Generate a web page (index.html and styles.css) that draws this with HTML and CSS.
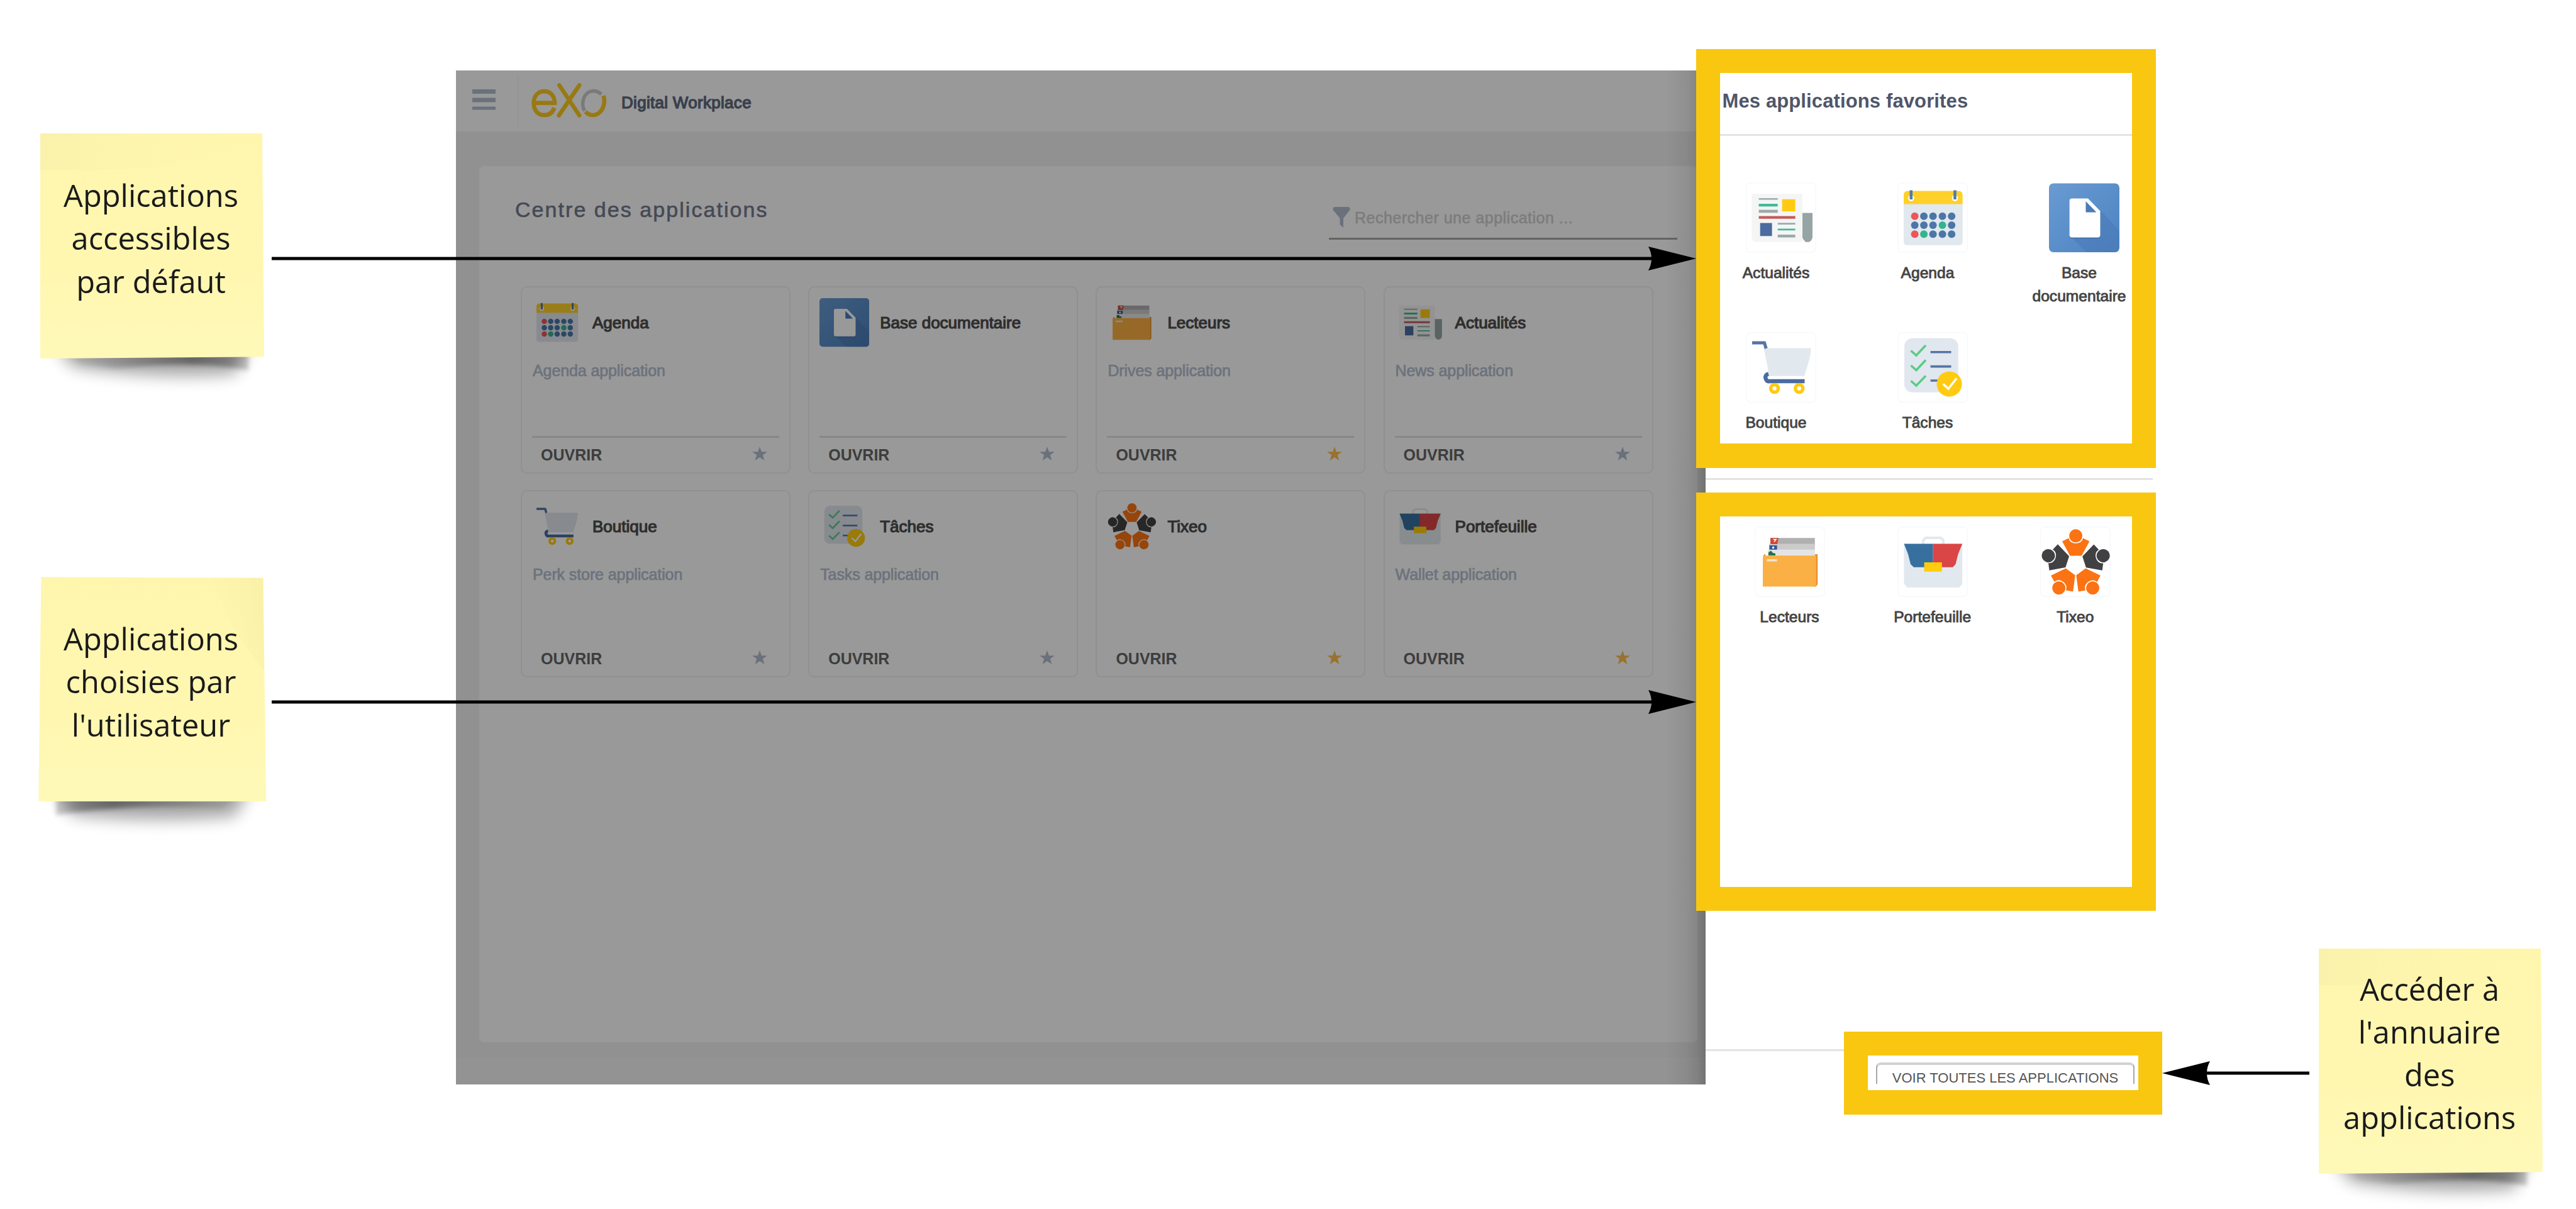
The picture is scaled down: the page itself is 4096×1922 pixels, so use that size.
FILE: index.html
```html
<!DOCTYPE html>
<html lang="fr">
<head>
<meta charset="utf-8">
<title>Centre des applications</title>
<link rel="stylesheet" href="styles.css">
</head>
<body>
<svg class="sprite" aria-hidden="true">
  <defs>
    <linearGradient id="doc-blue" x1="0" y1="0" x2="1" y2="1"><stop offset="0" stop-color="#6a9ad2"/><stop offset=".5" stop-color="#5a8fca"/><stop offset="1" stop-color="#4f82c0"/></linearGradient>
    <g id="tixeo-person">
      <path d="M35 23.4 45.5 18.4C47 29.500 66.5 29.500 68 18.4L78.4 23.4 66 46.5H47.4Z"/>
      <circle cx="56.6" cy="14.8" r="10.5"/>
    </g>
  </defs>
  <symbol id="news" viewBox="0 0 112 112">
    <path d="M9.4 18.2H90V94.7H17Q9.4 94.7 9.4 86Z" fill="#f5f5f5"/>
    <path d="M20.6 25h30.1v2.6H20.6zM20.6 43.5h30.1v4.7H20.6zM50.7 64.3h27.9v2.6H50.7zM50.7 83h27.9v4.4H50.7z" fill="#9aaaa9"/>
    <path d="M20.6 33.9h30.1v4.4H20.6zM50.7 73.6h27.9v2.6H50.7z" fill="#41ba93"/>
    <path d="M57.7 26.7h20.9V46H57.7z" fill="#ffcb12"/>
    <path d="M20.6 53.5h58v4.2h-58z" fill="#c45a5a"/>
    <path d="M22.7 64.5h18.9v20.8H22.7z" fill="#4b6c9f"/>
    <path d="M90 48.4h16V87Q105 93 100.5 94.7H95Q91 91 90 88Z" fill="#95a5a4"/>
  </symbol>
  <symbol id="calendar" viewBox="0 0 112 112">
    <path d="M10 34h93.7v60q0 5.8-5.8 5.8H15.8q-5.8 0-5.8-5.8z" fill="#e1e8ee"/>
    <path d="M10 34.5V20q0-6.6 6.6-6.6h80.5q6.6 0 6.6 6.6v14.5z" fill="#ffd02a"/>
    <circle cx="21.8" cy="25" r="4.8" fill="#fff"/><circle cx="91.5" cy="25" r="4.8" fill="#fff"/>
    <path d="M21.8 12.5V27M91.5 12.5V27" stroke="#527ba6" stroke-width="4.6" fill="none"/>
    <g fill="#4b76a8"><circle cx="42.1" cy="53.7" r="6"/><circle cx="56.6" cy="53.7" r="6"/><circle cx="71.6" cy="53.7" r="6"/><circle cx="86.2" cy="53.7" r="6"/><circle cx="27.6" cy="67.9" r="6"/><circle cx="42.1" cy="67.9" r="6"/><circle cx="56.6" cy="67.9" r="6"/><circle cx="86.2" cy="67.9" r="6"/><circle cx="56.6" cy="82.2" r="6"/><circle cx="71.6" cy="82.2" r="6"/><circle cx="86.2" cy="82.2" r="6"/></g>
    <g fill="#ec5657"><circle cx="27.6" cy="53.7" r="6"/><circle cx="27.6" cy="82.2" r="6"/></g>
    <g fill="#33b58c"><circle cx="71.6" cy="67.9" r="6"/><circle cx="42.1" cy="82.2" r="6"/></g>
  </symbol>
  <symbol id="document" viewBox="0 0 112 112">
    <rect y="1.5" width="112" height="109.5" rx="7" fill="url(#doc-blue)"/>
    <path d="M81.2 44 112 77v27q0 7-7 7H60L35 86.3Z" fill="#4577b3" opacity=".5"/>
    <path d="M36.6 26H62L81.5 45.5V83.5q0 4-4 4H36.6q-4 0-4-4V30q0-4 4-4z" fill="#3f6ea8" opacity=".5" transform="translate(0 2.5)"/>
    <path d="M36.6 25.5H62L81.5 45.5V83.5q0 4-4 4H36.6q-4 0-4-4V29.5q0-4 4-4z" fill="#fff"/>
    <path d="M58.5 30V47.5H75.5Z" fill="#4c7cb4"/>
  </symbol>
  <symbol id="cart" viewBox="0 0 112 112">
    <path d="M28.6 25.5H103.7C103 42 97 55 93.2 69.8H36.6C35 52 31 40 28.6 25.5Z" fill="#e1e8ee"/>
    <path d="M10 17H29.5L32.2 26" fill="none" stroke="#5474a6" stroke-width="5"/>
    <path d="M36 66.5Q30 68 31.5 73.5T38 78H93.5" fill="none" stroke="#4a6b9f" stroke-width="6.5"/>
    <g fill="#fff" stroke="#ffcb12" stroke-width="5.5"><circle cx="45.6" cy="89.5" r="6"/><circle cx="84.7" cy="89.5" r="6"/></g>
  </symbol>
  <symbol id="tasks" viewBox="0 0 112 112">
    <rect x="11" y="9.8" width="85.7" height="86" rx="13" fill="#e1e7ee"/>
    <path d="M21.5 29.5 30 37 45 21M21.5 53 30 60.5 45 44.5M21.5 77.5 30 85 45 69.5" fill="none" stroke="#5ccb86" stroke-width="3.6"/>
    <path d="M52.6 31.8H85.5M52.6 54.6H85.5M52.6 77H66" stroke="#5474a6" stroke-width="3.6"/>
    <circle cx="82.5" cy="82.5" r="20" fill="#ffcb12"/>
    <path d="M72.8 82.5 81 90 94 73.5" fill="none" stroke="#fff" stroke-width="3.4"/>
  </symbol>
  <symbol id="drives" viewBox="0 0 112 112">
    <path d="M95.7 44h4.5V92l-3 3.4h-4zM13 47l4-4v6z" fill="#e8922f"/>
    <path d="M25 18.2H95.7V30H25z" fill="#b0b0b0"/><path d="M22.8 27.6H95.7V40H22.8z" fill="#cbcbcb"/><path d="M21 36.7H95.7V50H21z" fill="#e4e4e4"/>
    <path d="M25 18.2H38L36 28H25z" fill="#cf4a35"/><path d="M29.5 20.5h4.5l-3 4" fill="none" stroke="#fff" stroke-width="1.5"/>
    <path d="M23.5 30H35.6V36.7H23.5z" fill="#2d569c"/><circle cx="29.5" cy="33.5" r="1.8" fill="#fff"/>
    <path d="M22 46V41L26 38.5 29 42 33 43V46Z" fill="#20744a"/>
    <path d="M13 48.5 15.5 46.3H97.6V93.5L95.5 95.4H13Z" fill="#fbb045"/>
    <path d="M19.5 52H35.6V55.6H19.5z" fill="#f4e4cf"/>
  </symbol>
  <symbol id="wallet" viewBox="0 0 112 112">
    <path d="M40.8 29V22L45 18H69L73 22V29" fill="none" stroke="#e1e9ef" stroke-width="4"/>
    <path d="M10.5 27.6H103.2V91l-5 6H15.5l-5-6z" fill="#e1e9ef"/>
    <path d="M10.5 27.6H56.6V64.8H26L21 60 17 44Z" fill="#37709f"/>
    <path d="M103.2 27.6H56.6V64.8H88L92.5 60 96.5 44Z" fill="#da4545"/>
    <path d="M42.6 57H70.8V71.8H42.6z" fill="#ffcd0b"/>
  </symbol>
  <symbol id="tixeo" viewBox="0 0 112 112">
    <use href="#tixeo-person" fill="#fb7313"/>
    <use href="#tixeo-person" fill="#414143" transform="rotate(72 56.6 60.6)"/>
    <use href="#tixeo-person" fill="#fb7313" transform="rotate(144 56.6 60.6)"/>
    <use href="#tixeo-person" fill="#fb7313" transform="rotate(216 56.6 60.6)"/>
    <use href="#tixeo-person" fill="#414143" transform="rotate(288 56.6 60.6)"/>
  </symbol>
  <symbol id="star" viewBox="0 0 24 22"><path d="M12 0 14.9 8.2H24L16.8 13.3 19.4 22 12 16.9 4.6 22 7.2 13.3 0 8.2H9.1Z"/></symbol>
</svg>

<main class="board">
  <div class="window">
    <div class="page">
      <header class="topbar">
        <svg class="burger" viewBox="0 0 37 33"><path d="M0 0h37v7H0zM0 13.5h37v7H0zM0 27.5h37v5H0z"/></svg>
        <span class="topbar-rule"></span>
        <svg class="logo" viewBox="1205 187 171 79">
          <g fill="none" stroke-linecap="round" stroke-width="9.5">
            <path class="gold" stroke-linecap="butt" d="M1209 232.500H1257.500C1257 215 1247 205.800 1233.500 205.800 1219 205.800 1209.500 217 1209.500 233S1219 260.300 1234 260.300C1246 260.300 1253 254 1256.500 243.500"/>
            <path class="gold" d="M1268 192 1313.800 261M1313.800 192 1267 261"/>
            <path class="silver" stroke-width="8" stroke-linecap="butt" d="M1326 250C1319 240 1320.500 224 1328 214S1351 201 1364 212.500"/>
            <path class="gold" stroke-linecap="butt" d="M1369 216C1373.500 232 1369 248 1357 256.500 1347 262.500 1336 261 1327.500 252.500"/>
          </g>
        </svg>
        <span class="brand">Digital Workplace</span>
      </header>
      <div class="content">
        <section class="center">
          <div class="center-head">
            <h1>Centre des applications</h1>
            <div class="search">
              <svg viewBox="0 0 28 33"><path d="M2 0H26L28 4 17 18V33L11.500 28V18L0 4Z"/></svg>
              <span>Rechercher une application ...</span>
            </div>
          </div>
          <div class="cards">
            <article class="card"><div class="card-head"><svg><use href="#calendar"/></svg><h2>Agenda</h2></div><p>Agenda application</p><footer><span>OUVRIR</span><svg class="star"><use href="#star"/></svg></footer></article>
            <article class="card"><div class="card-head"><svg><use href="#document"/></svg><h2>Base documentaire</h2></div><footer><span>OUVRIR</span><svg class="star"><use href="#star"/></svg></footer></article>
            <article class="card"><div class="card-head"><svg><use href="#drives"/></svg><h2>Lecteurs</h2></div><p>Drives application</p><footer><span>OUVRIR</span><svg class="star on"><use href="#star"/></svg></footer></article>
            <article class="card"><div class="card-head"><svg><use href="#news"/></svg><h2>Actualités</h2></div><p>News application</p><footer><span>OUVRIR</span><svg class="star"><use href="#star"/></svg></footer></article>
            <article class="card plain"><div class="card-head"><svg><use href="#cart"/></svg><h2>Boutique</h2></div><p>Perk store application</p><footer><span>OUVRIR</span><svg class="star"><use href="#star"/></svg></footer></article>
            <article class="card plain"><div class="card-head"><svg><use href="#tasks"/></svg><h2>Tâches</h2></div><p>Tasks application</p><footer><span>OUVRIR</span><svg class="star"><use href="#star"/></svg></footer></article>
            <article class="card plain"><div class="card-head"><svg><use href="#tixeo"/></svg><h2>Tixeo</h2></div><footer><span>OUVRIR</span><svg class="star on"><use href="#star"/></svg></footer></article>
            <article class="card plain"><div class="card-head"><svg><use href="#wallet"/></svg><h2>Portefeuille</h2></div><p>Wallet application</p><footer><span>OUVRIR</span><svg class="star on"><use href="#star"/></svg></footer></article>
          </div>
        </section>
      </div>
      <div class="page-foot"></div>
    </div>
    <aside class="drawer">
      <h2 class="drawer-title">Mes applications favorites</h2>
      <div class="apps default-apps">
        <div class="app"><svg><use href="#news"/></svg><span>Actualités</span></div>
        <div class="app"><svg><use href="#calendar"/></svg><span>Agenda</span></div>
        <div class="app"><svg class="bare"><use href="#document"/></svg><span>Base<br>documentaire</span></div>
        <div class="app"><svg><use href="#cart"/></svg><span>Boutique</span></div>
        <div class="app"><svg><use href="#tasks"/></svg><span>Tâches</span></div>
      </div>
      <div class="apps chosen-apps">
        <div class="app"><svg><use href="#drives"/></svg><span>Lecteurs</span></div>
        <div class="app"><svg><use href="#wallet"/></svg><span>Portefeuille</span></div>
        <div class="app"><svg><use href="#tixeo"/></svg><span>Tixeo</span></div>
      </div>
      <div class="drawer-foot"><div class="all-apps">VOIR TOUTES LES APPLICATIONS</div></div>
    </aside>
  </div>

  <svg class="arrow arrow-default" viewBox="0 0 2265 40"><path d="M0 17.500H2194V22.500H0z"/><path d="M2265 20 2189 1Q2199 20 2189 39Z"/></svg>
  <svg class="arrow arrow-chosen" viewBox="0 0 2265 40"><path d="M0 17.500H2194V22.500H0z"/><path d="M2265 20 2189 1Q2199 20 2189 39Z"/></svg>
  <svg class="arrow arrow-all" viewBox="0 0 234 40"><path d="M70 17.500H234V22.500H70z"/><path d="M0 20 76 1Q66 20 76 39Z"/></svg>

  <div class="frame frame-default"></div>
  <div class="frame frame-chosen"></div>
  <div class="frame frame-all"></div>

  <div class="note note-default">
    <svg viewBox="-40 -20 440 460">
      <defs>
        <linearGradient id="paper" x1="0" y1="0" x2="0" y2="1"><stop offset="0" stop-color="#fff6ae"/><stop offset=".6" stop-color="#fff7b0"/><stop offset="1" stop-color="#fff9b9"/></linearGradient>
        <linearGradient id="fold" x1="0" y1="0" x2="1" y2="0"><stop offset="0" stop-color="#faf2ac"/><stop offset="1" stop-color="#fff6ae" stop-opacity="0"/></linearGradient>
        <linearGradient id="corner" x1="1" y1=".2" x2=".2" y2=".5"><stop offset="0" stop-color="#f9f1a8"/><stop offset="1" stop-color="#fbf3ab" stop-opacity=".2"/></linearGradient>
        <filter id="soft" x="-20%" y="-60%" width="140%" height="220%"><feGaussianBlur stdDeviation="13"/></filter>
        <filter id="tight" x="-20%" y="-60%" width="140%" height="220%"><feGaussianBlur stdDeviation="3.5"/></filter>
        <linearGradient id="lift-right" x1="0" x2="1"><stop offset="0" stop-color="#000" stop-opacity="0"/><stop offset=".7" stop-color="#000" stop-opacity=".38"/><stop offset="1" stop-color="#000" stop-opacity=".2"/></linearGradient>
        <linearGradient id="lift-left" x1="1" x2="0"><stop offset="0" stop-color="#000" stop-opacity="0"/><stop offset=".7" stop-color="#000" stop-opacity=".38"/><stop offset="1" stop-color="#000" stop-opacity=".2"/></linearGradient>
      </defs>
      <path d="M22 330H335L310 382Q180 392 50 370Z" opacity=".36" filter="url(#soft)"/>
      <path d="M40 340H331V377Q250 360 120 374L60 368Z" fill="url(#lift-right)" filter="url(#tight)"/>
      <path d="M0 0H353L356 355.200 0 358Z" fill="url(#paper)"/>
      <path d="M0 0H353L260 46Q130 62 0 58Z" fill="url(#fold)"/>
    </svg>
    <p>Applications<br>accessibles<br>par défaut</p>
  </div>
  <div class="note note-chosen">
    <svg viewBox="-40 -20 440 460">
      <path d="M22 330H335L310 380Q180 392 50 378Z" opacity=".36" filter="url(#soft)"/>
      <path d="M25 340H330L290 368Q140 360 25 379Z" fill="url(#lift-left)" filter="url(#tight)"/>
      <path d="M1.400 0.300 354.400 1.800 359.300 357H-2.700Z" fill="url(#paper)"/>
      <path d="M270 1.500 354.400 1.800 355.500 150 315 95Z" fill="url(#corner)"/>
    </svg>
    <p>Applications<br>choisies par<br>l'utilisateur</p>
  </div>
  <div class="note note-all">
    <svg viewBox="-40 -20 440 460">
      <path d="M22 330H335L310 382Q180 392 50 370Z" opacity=".36" filter="url(#soft)"/>
      <path d="M40 340H331V377Q250 360 120 374L60 368Z" fill="url(#lift-right)" filter="url(#tight)"/>
      <path d="M0 0H353L356 355.200 0 358Z" fill="url(#paper)"/>
      <path d="M0 0H353L260 46Q130 62 0 58Z" fill="url(#fold)"/>
    </svg>
    <p>Accéder à<br>l'annuaire<br>des<br>applications</p>
  </div>
</main>
</body>
</html>
```
FILE: styles.css
```css
* { box-sizing: border-box; margin: 0; padding: 0; }

body {
  background: #fff;
  font-family: "Liberation Sans", Arial, sans-serif;
}

svg { display: block; flex: none; }
.sprite { position: absolute; width: 0; height: 0; }

.board {
  position: relative;
  width: 4096px;
  height: 1922px;
  overflow: hidden;
  background: #fff;
}

/* application window */
.window {
  position: absolute;
  left: 725px;
  top: 112px;
  width: 2698px;
  height: 1612px;
  display: flex;
}

.page {
  position: relative;
  width: 1987px;
  display: flex;
  flex-direction: column;
  background: #f2f2f2;
}

/* dimming layer, with the drawer's shadow on its right edge */
.page::after {
  content: "";
  position: absolute;
  inset: 0;
  background:
    linear-gradient(to left, rgba(0, 0, 0, .22), rgba(0, 0, 0, .12) 14px, rgba(0, 0, 0, .06) 32px, transparent 64px),
    rgba(0, 0, 0, .4);
}

.topbar {
  display: flex;
  align-items: flex-start;
  height: 97px;
  padding-left: 26px;
  background: #fff;
}
.burger { width: 37px; height: 33px; margin-top: 30px; fill: #b1bccf; }
.topbar-rule { width: 2px; height: 82px; margin: 7px 0 0 35px; background: #f8f8f8; }
.logo { width: 120px; height: 55px; margin: 20px 0 0 20px; }
.gold { stroke: #fdca20; }
.silver { stroke: #cbcbcb; }
.brand {
  margin: 36px 0 0 23px;
  font-size: 26px;
  line-height: 30px;
  letter-spacing: .3px;
  color: #5f6a80;
  -webkit-text-stroke: 1.3px #5f6a80;
}

.content { padding: 55px 0 0 37px; height: 1472px; }
.center {
  width: 1937px;
  height: 1393px;
  border-radius: 8px;
  background: #fff;
}
.center-head {
  display: flex;
  justify-content: space-between;
  height: 117px;
  padding: 0 32px 0 57px;
}
.center-head h1 {
  margin-top: 49px;
  font-size: 34px;
  font-weight: 400;
  line-height: 40px;
  letter-spacing: 2.05px;
  color: #737b8e;
  -webkit-text-stroke: .6px #737b8e;
}
.search {
  display: flex;
  gap: 7px;
  width: 554px;
  height: 52px;
  margin-top: 65px;
  padding-left: 6px;
  border-bottom: 3px solid #a6a6a6;
  font-size: 25px;
  line-height: 30px;
  letter-spacing: .5px;
  color: #cfcfcf;
  -webkit-text-stroke: .6px #cfcfcf;
}
.search svg { width: 28px; height: 33px; fill: #b1bccf; }
.search span { margin-top: 2px; }

.cards {
  display: grid;
  grid-template-columns: repeat(4, 429px);
  grid-auto-rows: 298px;
  gap: 26px 28.2px;
  margin: 74px 0 0 66px;
}
.card {
  display: flex;
  flex-direction: column;
  padding: 16px 16px 0;
  border: 2px solid #f0f0f0;
  border-radius: 10px;
}
.card-head { display: flex; align-items: center; gap: 17px; height: 79px; }
.card-head svg { width: 79px; height: 79px; }
.card-head h2 {
  font-size: 26px;
  font-weight: 400;
  line-height: 30px;
  color: #4d4d4d;
  -webkit-text-stroke: 1.2px #4d4d4d;
}
.card p {
  margin-top: 22px;
  padding-left: 1px;
  font-size: 25px;
  line-height: 30px;
  letter-spacing: -.1px;
  color: #b5bfd0;
  -webkit-text-stroke: .7px #b5bfd0;
}
.card footer {
  display: flex;
  justify-content: space-between;
  height: 58px;
  margin-top: auto;
  padding: 12px 19px 0 14px;
  border-top: 3px solid #e2e2e2;
}
.card.plain footer { border-top-color: transparent; }
.card footer span { font-size: 25px; font-weight: 700; line-height: 30px; color: #666; }
.star { width: 24px; height: 22px; margin-top: 2px; fill: #b1bccf; }
.star.on { fill: #ffbd50; }

.page-foot { height: 43px; background: #f5f5f5; }

/* favourites drawer */
.drawer { width: 711px; background: #fff; }
.drawer-title {
  height: 104px;
  padding: 31px 0 0 26.5px;
  border-bottom: 3px solid #e3e3e3;
  font-size: 31px;
  line-height: 36px;
  letter-spacing: .12px;
  color: #4f5669;
}
.apps { display: grid; border-bottom: 3px solid #e3e3e3; align-content: start; }
.default-apps {
  grid-template-columns: repeat(3, 200px);
  grid-auto-rows: 238px;
  column-gap: 41px;
  height: 547px;
  padding: 74px 0 0 12px;
}
.chosen-apps {
  grid-template-columns: repeat(3, 200px);
  column-gap: 27.2px;
  height: 908px;
  padding: 74px 0 0 33.5px;
}
.app {
  display: flex;
  flex-direction: column;
  align-items: center;
  font-size: 24.6px;
  line-height: 36.7px;
  text-align: center;
  color: #444;
  -webkit-text-stroke: .9px #444;
}
.app svg {
  width: 112px;
  height: 112px;
  margin-bottom: 14px;
  border-radius: 8px;
  box-shadow: inset 0 0 0 1.5px #f6f8fd;
}
.app svg.bare { box-shadow: none; }
.default-apps svg { margin-left: 15px; }
.drawer-foot { display: flex; justify-content: flex-end; padding: 18px 29px 0 0; }
.all-apps {
  width: 411px;
  height: 34px;
  padding-top: 8px;
  border: 2px solid #a8a8a8;
  border-top: 4px solid #d2d2d2;
  border-bottom: 0;
  border-radius: 8px 8px 0 0;
  font-size: 22px;
  line-height: 26px;
  text-align: center;
  white-space: nowrap;
  color: #555;
}

/* highlight frames */
.frame { position: absolute; border: 38px solid #f9c710; }
.frame-default { left: 2697px; top: 78px; width: 731px; height: 666px; border-bottom-width: 39px; }
.frame-chosen { left: 2697px; top: 783px; width: 731px; height: 665px; }
.frame-all { left: 2932px; top: 1640px; width: 506px; height: 132px; border-bottom-width: 39px; }

.arrow { position: absolute; height: 40px; }
.arrow-default { left: 432px; top: 391px; width: 2265px; }
.arrow-chosen { left: 432px; top: 1096px; width: 2265px; }
.arrow-all { left: 3438px; top: 1686px; width: 234px; }

/* sticky notes */
.note {
  position: absolute;
  width: 353px;
  height: 358px;
  display: flex;
  align-items: center;
  justify-content: center;
  padding-bottom: 25px;
}
.note svg { position: absolute; left: -40px; top: -20px; width: 440px; height: 460px; }
.note p {
  position: relative;
  font-family: "Open Sans", "Noto Sans", sans-serif;
  font-size: 48.8px;
  line-height: 68.1px;
  text-align: center;
  white-space: nowrap;
  color: #1a1a1a;
}
.note-default { left: 63.5px; top: 212px; }
.note-chosen { left: 63.5px; top: 917px; }
.note-all { left: 3686.7px; top: 1507.5px; }
```
